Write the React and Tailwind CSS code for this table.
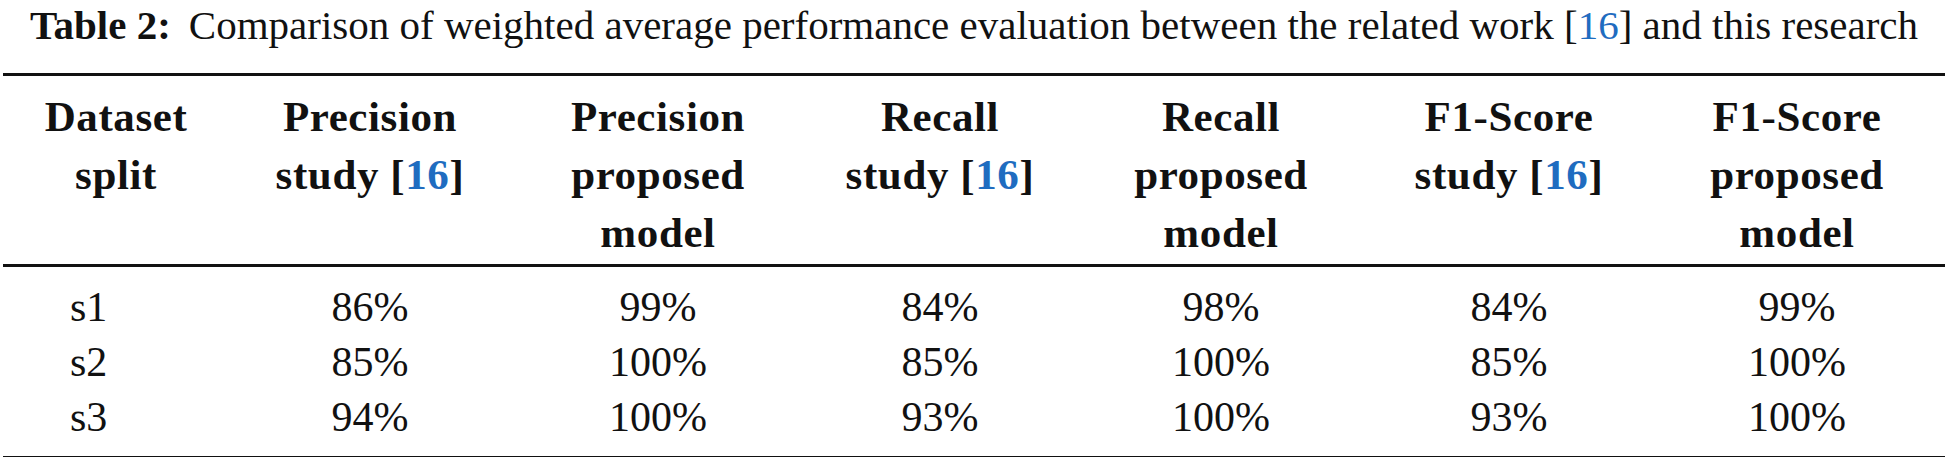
const cols = [
  "w-[232px]",
  "w-[276px]",
  "w-[300px]",
  "w-[264px]",
  "w-[298px]",
  "w-[278px]",
  "w-[298px]",
];

const Ref = () => <span className="text-[#1f6cc0]">16</span>;

const headers = [
  ["Dataset", "split"],
  ["Precision", <>study [<Ref />]</>],
  ["Precision", "proposed", "model"],
  ["Recall", <>study [<Ref />]</>],
  ["Recall", "proposed", "model"],
  ["F1-Score", <>study [<Ref />]</>],
  ["F1-Score", "proposed", "model"],
];

const rows = [
  ["s1", "86%", "99%", "84%", "98%", "84%", "99%"],
  ["s2", "85%", "100%", "85%", "100%", "85%", "100%"],
  ["s3", "94%", "100%", "93%", "100%", "93%", "100%"],
];

export default function App() {
  return (
    <div className="w-[1948px] h-[457px] bg-white text-[#111] font-['Liberation_Serif',serif] overflow-hidden">
      {/* Caption */}
      <div className="h-[73px] flex items-start justify-center pt-[2px] text-[41px] leading-[46px] whitespace-nowrap">
        <span className="font-bold">Table 2:</span>
        <span className="ml-[18px]">
          Comparison of weighted average performance evaluation between the related work [<Ref />] and this research
        </span>
      </div>

      <div className="mx-[3px] border-t-[3px] border-[#111]" />

      {/* Header */}
      <div className="flex h-[188px] pt-[12px] font-bold text-[43px] leading-[58px] tracking-[0.6px]">
        {headers.map((lines, i) => (
          <div key={i} className={`${cols[i]} shrink-0 flex flex-col items-center`}>
            {lines.map((l, j) => (
              <div key={j} className="whitespace-nowrap">{l}</div>
            ))}
          </div>
        ))}
      </div>

      <div className="mx-[3px] border-t-[3px] border-[#111]" />

      {/* Body */}
      <div className="flex flex-col pt-[13px] pb-[11px] text-[42px] leading-[55px]">
        {rows.map((r, i) => (
          <div key={i} className="flex">
            {r.map((c, j) => (
              <div
                key={j}
                className={`${cols[j]} shrink-0 ${j === 0 ? "pl-[70px] text-left" : "text-center"}`}
              >
                {c}
              </div>
            ))}
          </div>
        ))}
      </div>

      <div className="mx-[3px] border-t-[3px] border-[#111]" />
    </div>
  );
}
